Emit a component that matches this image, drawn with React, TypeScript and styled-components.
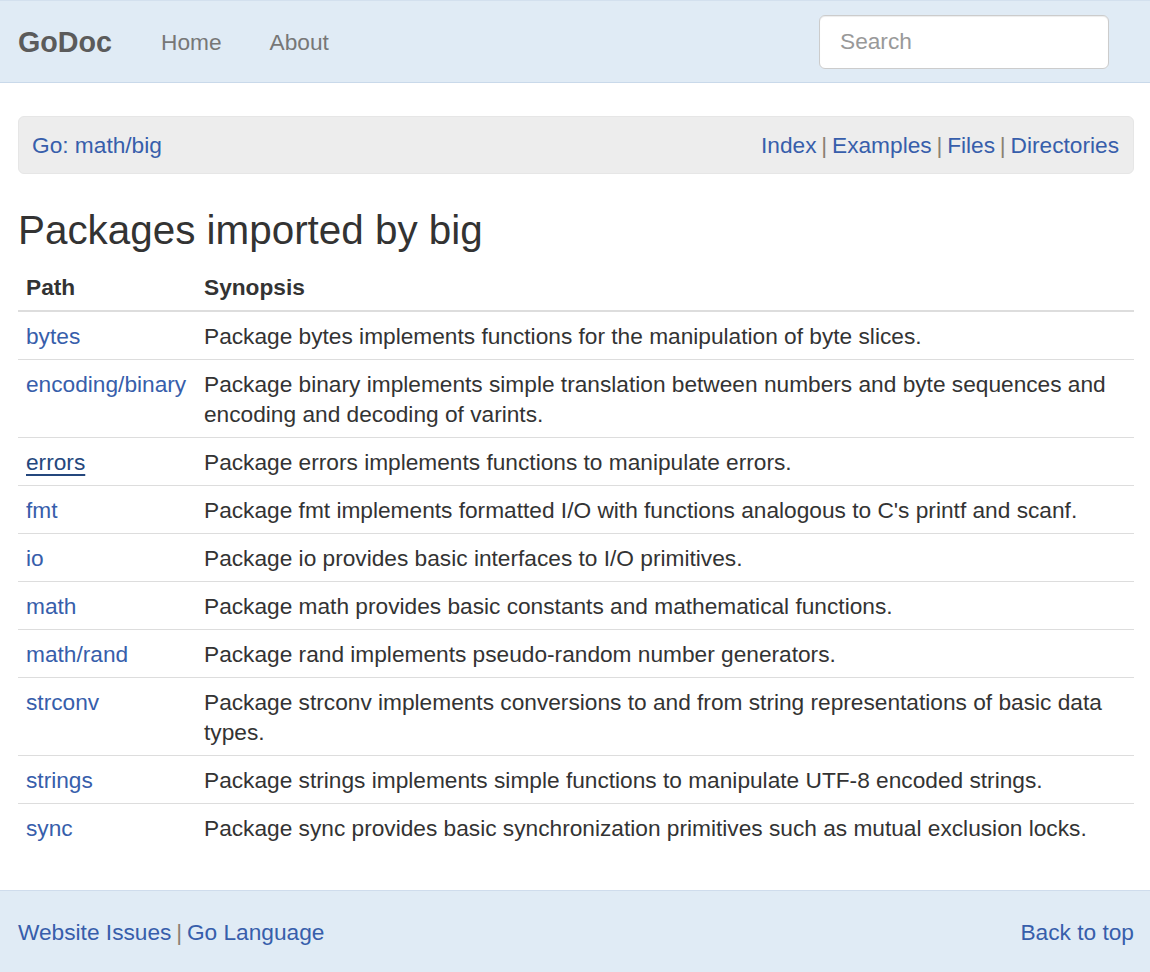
import React from "react";
import styled, { createGlobalStyle } from "styled-components";

const Global = createGlobalStyle`
  html, body { margin: 0; padding: 0; background: #fff; }
  body {
    font-family: "Liberation Sans", Arial, Helvetica, sans-serif;
    font-size: 22.7px;
    line-height: 30px;
    color: #333;
  }
  * { box-sizing: border-box; }
`;

const Page = styled.div`
  min-height: 972px;
  display: flex;
  flex-direction: column;
`;

const NavBar = styled.header`
  background: #e0ebf5;
  border-top: 1px solid #d3e0ee;
  border-bottom: 1px solid #c9d9ea;
  height: 83px;
  padding: 0 41px 0 18px;
  display: flex;
  align-items: center;
`;

const Brand = styled.a`
  font-size: 28.7px;
  font-weight: bold;
  color: #5b5b5b;
  text-decoration: none;
  margin-right: 25px;
`;

const NavLink = styled.a`
  font-size: 22.7px;
  color: #777;
  text-decoration: none;
  padding: 0 24px;
`;

const Spacer = styled.div`
  flex: 1;
`;

const SearchInput = styled.input`
  width: 290px;
  height: 54px;
  border: 1px solid #ccc;
  border-radius: 6px;
  box-shadow: inset 0 1px 1px rgba(0, 0, 0, 0.075);
  padding: 0 20px;
  font-family: "Liberation Sans", Arial, sans-serif;
  font-size: 22.7px;
  color: #555;
  background: #fff;
  outline: none;
  &::placeholder { color: #999; }
`;

const Main = styled.main`
  flex: 1;
  padding: 33px 16px 39px 18px;
`;

const Crumbs = styled.div`
  background: #ededed;
  border: 1px solid #e6e6e6;
  border-radius: 6px;
  padding: 13px 14px 13px 13px;
  display: flex;
  justify-content: space-between;
  align-items: center;
`;

const Links = styled.div`
  white-space: pre;
`;

const Link = styled.a<{ $active?: boolean }>`
  color: ${(p) => (p.$active ? "#24477d" : "#375eab")};
  text-decoration: ${(p) => (p.$active ? "underline" : "none")};
  text-underline-offset: 4px;
`;

const Sep = styled.span`
  color: #8a8172;
  word-spacing: -1.5px;
`;

const Heading = styled.h2`
  font-size: 40.4px;
  font-weight: normal;
  line-height: 44px;
  margin: 34px 0 12px;
  color: #333;
`;

const Table = styled.table`
  width: 100%;
  border-collapse: collapse;
  border-spacing: 0;
`;

const Th = styled.th`
  text-align: left;
  font-weight: bold;
  padding: 8px 8px 8px;
  border-bottom: 2px solid #ddd;
  vertical-align: bottom;
  &:first-child { width: 178px; }
`;

const Tr = styled.tr`
  & + & > td { border-top: 1px solid #ddd; }
`;

const Td = styled.td`
  padding: 9px 8px 8px;
  vertical-align: top;
  &:first-child { white-space: nowrap; }
`;

const Footer = styled.footer`
  background: #e0ebf5;
  border-top: 1px solid #cfdcec;
  padding: 26px 16px 26px 18px;
  display: flex;
  justify-content: space-between;
  align-items: center;
`;

const rows: { path: string; synopsis: string; active?: boolean }[] = [
  { path: "bytes", synopsis: "Package bytes implements functions for the manipulation of byte slices." },
  {
    path: "encoding/binary",
    synopsis:
      "Package binary implements simple translation between numbers and byte sequences and encoding and decoding of varints.",
  },
  { path: "errors", synopsis: "Package errors implements functions to manipulate errors.", active: true },
  { path: "fmt", synopsis: "Package fmt implements formatted I/O with functions analogous to C's printf and scanf." },
  { path: "io", synopsis: "Package io provides basic interfaces to I/O primitives." },
  { path: "math", synopsis: "Package math provides basic constants and mathematical functions." },
  { path: "math/rand", synopsis: "Package rand implements pseudo-random number generators." },
  {
    path: "strconv",
    synopsis: "Package strconv implements conversions to and from string representations of basic data types.",
  },
  { path: "strings", synopsis: "Package strings implements simple functions to manipulate UTF-8 encoded strings." },
  { path: "sync", synopsis: "Package sync provides basic synchronization primitives such as mutual exclusion locks." },
];

export default function App() {
  return (
    <Page>
      <Global />
      <NavBar>
        <Brand href="#">GoDoc</Brand>
        <NavLink href="#">Home</NavLink>
        <NavLink href="#">About</NavLink>
        <Spacer />
        <SearchInput placeholder="Search" />
      </NavBar>
      <Main>
        <Crumbs>
          <Link href="#">Go: math/big</Link>
          <Links>
            <Link href="#">Index</Link>
            <Sep> | </Sep>
            <Link href="#">Examples</Link>
            <Sep> | </Sep>
            <Link href="#">Files</Link>
            <Sep> | </Sep>
            <Link href="#">Directories</Link>
          </Links>
        </Crumbs>
        <Heading>Packages imported by big</Heading>
        <Table>
          <thead>
            <tr>
              <Th>Path</Th>
              <Th>Synopsis</Th>
            </tr>
          </thead>
          <tbody>
            {rows.map((r) => (
              <Tr key={r.path}>
                <Td>
                  <Link href="#" $active={r.active}>
                    {r.path}
                  </Link>
                </Td>
                <Td>{r.synopsis}</Td>
              </Tr>
            ))}
          </tbody>
        </Table>
      </Main>
      <Footer>
        <Links>
          <Link href="#">Website Issues</Link>
          <Sep> | </Sep>
          <Link href="#">Go Language</Link>
        </Links>
        <Link href="#">Back to top</Link>
      </Footer>
    </Page>
  );
}
